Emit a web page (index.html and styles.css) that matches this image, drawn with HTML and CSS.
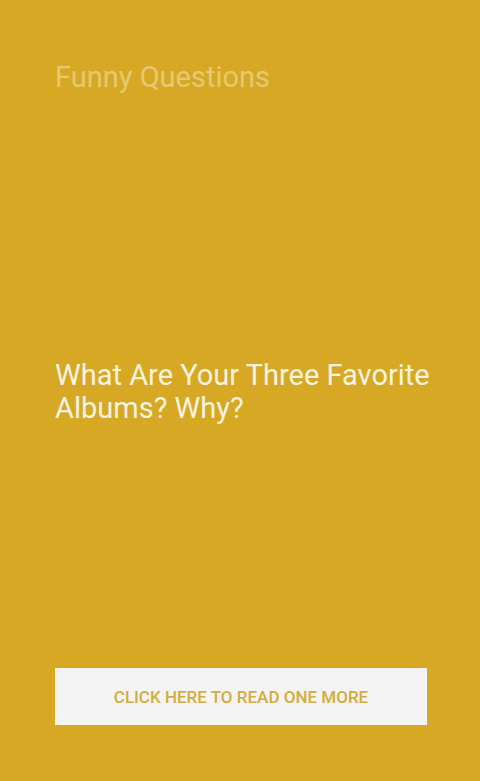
FILE: index.html
```html
<!DOCTYPE html>
<html lang="en">
<head>
  <meta charset="UTF-8" />
  <title>Funny Questions</title>
  <meta name="viewport" content="width=device-width, initial-scale=1.0" />
  <link rel="stylesheet" href="styles.css">
</head>
<body>
  <div class="container">
    <h1 class="title">Funny Questions</h1>
    <p class="question">What Are Your Three Favorite<br>Albums? Why?</p>
    <button class="next-btn" type="button">Click here to read one more</button>
  </div>
</body>
</html>
```

FILE: styles.css
```css
body {
  margin: 0;
  background: #d6a824;
  color: #faf3e0;
  font-family: Roboto, sans-serif;
}
.container {
  box-sizing: border-box;
  min-height: 100vh;
  padding: 61px 53px 56px 55px;
  display: flex;
  flex-direction: column;
  justify-content: space-between;
}
.title,
.question {
  margin: 0;
  font-size: 29px;
  font-weight: 400;
  line-height: 33px;
}
.title {
  color: #e8c870;
}
.question {
  margin-top: 22px;
  white-space: nowrap;
}
.next-btn {
  width: 100%;
  height: 57px;
  border: none;
  background: #f4f4f4;
  color: #d4ac3c;
  font-family: inherit;
  font-size: 17px;
  font-weight: 500;
  text-transform: uppercase;
  cursor: pointer;
}
```
